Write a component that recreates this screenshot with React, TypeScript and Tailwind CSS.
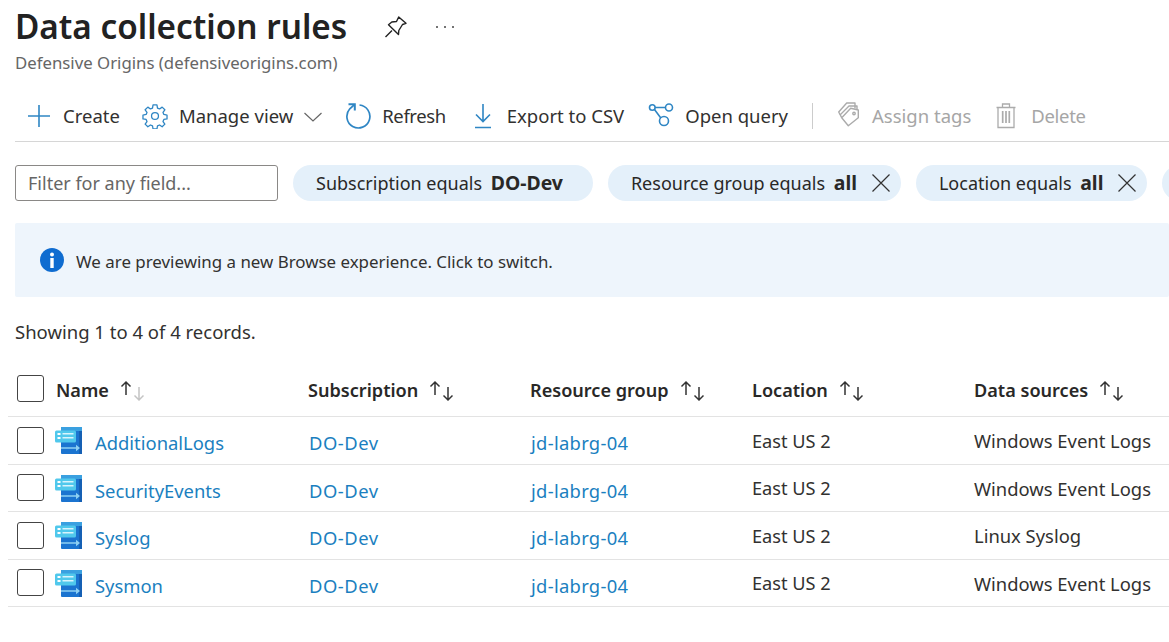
import type { ReactNode } from "react";

const font = "font-['Noto_Sans','Open_Sans',sans-serif]";

const rows = [
  { name: "AdditionalLogs", source: "Windows Event Logs" },
  { name: "SecurityEvents", source: "Windows Event Logs" },
  { name: "Syslog", source: "Linux Syslog" },
  { name: "Sysmon", source: "Windows Event Logs" },
];

const PlusIcon = () => (
  <svg width="24" height="24" viewBox="0 0 24 24" fill="none" stroke="#2f86c4" strokeWidth="1.6">
    <path d="M12 1v22M1 12h22" />
  </svg>
);

const GearIcon = () => (
  <svg width="26" height="26" viewBox="0 0 24 24" fill="none" stroke="#2f86c4" strokeWidth="1.2" strokeLinejoin="round">
    <circle cx="12" cy="12" r="3.2" />
    <path d="M10.2 1.8h3.6l.5 2.9 1.9.8 2.4-1.7 2.5 2.5-1.7 2.4.8 1.9 2.9.5v3.6l-2.9.5-.8 1.9 1.7 2.4-2.5 2.5-2.4-1.7-1.9.8-.5 2.9h-3.6l-.5-2.9-1.9-.8-2.4 1.7-2.5-2.5 1.7-2.4-.8-1.9-2.9-.5v-3.6l2.9-.5.8-1.9-1.7-2.4 2.5-2.5 2.4 1.7 1.9-.8z" />
  </svg>
);

const RefreshIcon = () => (
  <svg width="26" height="26" viewBox="0 0 26 26" fill="none" stroke="#2f86c4" strokeWidth="1.7">
    <path d="M14.5 2A11.5 11.5 0 1 1 4.8 5.8L9.5 1.5" />
    <path d="M3.5 1.2h6.3v6.3" strokeWidth="2" />
  </svg>
);

const DownloadIcon = () => (
  <svg width="18" height="26" viewBox="0 0 18 26" fill="none" stroke="#2f86c4" strokeWidth="1.6">
    <path d="M9 1v17M2 11.5 9 18.5l7-7M1 24.5h16" />
  </svg>
);

const QueryIcon = () => (
  <svg width="26" height="26" viewBox="0 0 26 26" fill="none" stroke="#2f86c4" strokeWidth="1.6">
    <circle cx="4.3" cy="4.5" r="2.8" />
    <circle cx="21" cy="4.5" r="3.5" />
    <circle cx="16" cy="18" r="4.5" />
    <path d="M7.1 4.5h10.4M6.5 6.5l6.3 8.5" />
  </svg>
);

const TagsIcon = () => (
  <svg width="24" height="28" viewBox="0 0 24 28" fill="none" stroke="#ababab" strokeWidth="1.4" strokeLinejoin="round">
    <path d="M3.7 15.7 12.7 6.3 20.3 8V15.7L10.3 23.7z" />
    <path d="M3.7 15.7 0.7 10 8.7 1H17V6.5" />
    <path d="M2 13 11 4H19V7.5" />
    <circle cx="16" cy="11.5" r="1.2" />
  </svg>
);

const TrashIcon = () => (
  <svg width="20" height="26" viewBox="0 0 20 26" fill="none" stroke="#ababab" strokeWidth="1.3">
    <path d="M0.5 4.5h19M6.5 4.5V1h7v3.5M2 4.5v20h16v-20" />
    <path d="M6.7 8v12M10 8v12M13.3 8v12" strokeWidth="1.7" />
  </svg>
);

const PinIcon = () => (
  <svg width="22" height="22" viewBox="0 0 22 22" fill="none" stroke="#222" strokeWidth="1.4" strokeLinejoin="round">
    <path d="M0.5 21 7 14.5M13.7 1 21 7.3 17.5 8.5 13.8 14.5 13.5 18.5 3.5 8.8 6.8 6 11.5 5.5z" />
  </svg>
);

const CloseIcon = () => (
  <svg width="20" height="20" viewBox="0 0 20 20" fill="none" stroke="#333" strokeWidth="1.2">
    <path d="M1.5 1.5l17 17M18.5 1.5l-17 17" />
  </svg>
);

const InfoIcon = () => (
  <svg width="24" height="24" viewBox="0 0 24 24">
    <circle cx="12" cy="12" r="12" fill="#0f6cd0" />
    <circle cx="12" cy="6.5" r="2" fill="#fff" />
    <rect x="10.3" y="10" width="3.4" height="10" fill="#fff" />
  </svg>
);

const SortIcon = ({ dim }: { dim?: boolean }) => (
  <svg width="26" height="22" viewBox="0 0 26 22" fill="none" strokeWidth="1.5">
    <path d="M8 15V2M3.5 6.5 8 2l4.5 4.5" stroke="#333" />
    <path d="M21 7v13M16.5 15.5 21 20l4.5-4.5" stroke={dim ? "#c4c4c4" : "#333"} />
  </svg>
);

const RuleIcon = () => (
  <svg width="28" height="28" viewBox="0 0 28 28">
    <rect x="6" y="1" width="21" height="27" rx="1" fill="#1b74d0" />
    <rect x="6" y="1" width="21" height="4" fill="#3aa0e0" />
    <rect x="24" y="5" width="3" height="23" fill="#1560b4" />
    <path d="M6 21.2h15v-2.5l4 3.3-4 3.3v-2.5H6z" fill="#8ed0f2" />
    <rect x="0" y="4.5" width="21" height="12" rx="1.5" fill="#50c8ec" />
    <rect x="2.5" y="7" width="3" height="2" fill="#fff" />
    <rect x="2.5" y="11" width="3" height="2" fill="#fff" />
    <rect x="7.5" y="7" width="11" height="1.5" fill="#d8f4fc" />
    <rect x="7.5" y="11" width="11" height="1.5" fill="#d8f4fc" />
  </svg>
);

function ToolButton({ icon, label, disabled, className }: { icon: ReactNode; label: string; disabled?: boolean; className: string }) {
  return (
    <div className={`flex items-center text-[18.5px] ${disabled ? "text-[#a6a6a6]" : "text-[#323130]"} ${className}`}>
      {icon}
      <span>{label}</span>
    </div>
  );
}

function Pill({ label, value, close }: { label: string; value: string; close?: boolean }) {
  return (
    <div className="flex h-9 shrink-0 items-center gap-[14px] whitespace-nowrap rounded-full bg-[#e4f0fa] pl-[23px] pr-[10px] text-[18px] text-[#292827]">
      <span className={close ? "" : "pr-[20px]"}>
        {label} <b className="ml-[4px] text-[19.4px] font-bold leading-none">{value}</b>
      </span>
      {close && <CloseIcon />}
    </div>
  );
}

function Check({ className }: { className?: string }) {
  return <div className={`h-[27px] w-[27px] rounded-[3px] border border-[#444] bg-white ${className ?? ""}`} />;
}

function HeaderCell({ label, dim }: { label: string; dim?: boolean }) {
  return (
    <div className="flex items-center gap-[9px] pt-[6px] text-[18.1px] font-semibold text-[#292827]">
      <span>{label}</span>
      <SortIcon dim={dim} />
    </div>
  );
}

export default function App() {
  return (
    <div className={`${font} h-[642px] w-[1169px] overflow-hidden bg-white`}>
      <div className="pl-[15px]">
        <div className="flex h-[54px] items-center">
          <h1 className="text-[33.3px] font-semibold leading-none text-[#222]">Data collection rules</h1>
          <div className="ml-[38px]">
            <PinIcon />
          </div>
          <div className="ml-[29px] flex gap-[6px]">
            <div className="h-[2px] w-[2px] rounded-full bg-[#444]" />
            <div className="h-[2px] w-[2px] rounded-full bg-[#444]" />
            <div className="h-[2px] w-[2px] rounded-full bg-[#444]" />
          </div>
        </div>
        <div className="h-[25px] text-[16.8px] leading-[18px] text-[#666]">Defensive Origins (defensiveorigins.com)</div>
      </div>

      <div className="ml-[15px] flex h-[63px] items-center border-b border-[#d6d6d6] pl-[12px] pt-[12px]">
        <ToolButton className="gap-[12px]" icon={<PlusIcon />} label="Create" />
        <ToolButton className="ml-[22px] gap-[11px]" icon={<GearIcon />} label="Manage view" />
        <svg className="ml-[10px] mt-[2px]" width="20" height="12" viewBox="0 0 20 12" fill="none" stroke="#666" strokeWidth="1.2">
          <path d="M1.5 2 10 10l8.5-8" />
        </svg>
        <ToolButton className="ml-[22px] gap-[11px] tracking-[-0.4px]" icon={<RefreshIcon />} label="Refresh" />
        <ToolButton className="ml-[28px] gap-[15px]" icon={<DownloadIcon />} label="Export to CSV" />
        <ToolButton className="ml-[24px] gap-[11px]" icon={<QueryIcon />} label="Open query" />
        <div className="ml-[24px] h-[26px] w-px bg-[#ccc]" />
        <ToolButton className="ml-[25px] gap-[10px]" icon={<TagsIcon />} label="Assign tags" disabled />
        <ToolButton className="ml-[25px] gap-[15px] tracking-[-0.3px]" icon={<TrashIcon />} label="Delete" disabled />
      </div>

      <div className="flex items-center gap-[15px] overflow-hidden pl-[15px] pt-[23px]">
        <div className="flex h-9 w-[263px] shrink-0 items-center rounded-[3px] border border-[#8a8886] pl-[12px] text-[18px] text-[#666]">
          Filter for any field...
        </div>
        <Pill label="Subscription equals" value="DO-Dev" />
        <Pill label="Resource group equals" value="all" close />
        <Pill label="Location equals" value="all" close />
        <div className="h-9 w-[40px] shrink-0 rounded-l-full bg-[#e4f0fa]" />
      </div>

      <div className="ml-[15px] mt-[22px] flex h-[74px] items-center gap-[12px] rounded-[2px] bg-[#eef5fc] pl-[25px] text-[16.9px] text-[#323130]">
        <InfoIcon />
        <span className="pt-[3px]">We are previewing a new Browse experience. Click to switch.</span>
      </div>

      <div className="pl-[15px] pt-[23px] text-[18.5px] leading-[24px] text-[#323130]">Showing 1 to 4 of 4 records.</div>

      <div className="ml-[8px] mt-[16px]">
        <div className="grid h-[57px] grid-cols-[300px_222px_222px_222px_1fr] items-center border-b border-[#e3e3e3]">
          <div className="flex items-center gap-[12px] pl-[9px]">
            <Check className="mt-[2px]" />
            <HeaderCell label="Name" dim />
          </div>
          <HeaderCell label="Subscription" />
          <HeaderCell label="Resource group" />
          <HeaderCell label="Location" />
          <HeaderCell label="Data sources" />
        </div>
        {rows.map((row) => (
          <div
            key={row.name}
            className="grid h-[47.5px] grid-cols-[300px_222px_222px_222px_1fr] items-center border-b border-[#e3e3e3] text-[18.4px]"
          >
            <div className="flex items-center gap-[11px] pl-[9px]">
              <Check />
              <RuleIcon />
              <span className="pl-px pt-[6px] text-[#1b7fc0]">{row.name}</span>
            </div>
            <span className="pl-px pt-[6px] tracking-[0.5px] text-[#1b7fc0]">DO-Dev</span>
            <span className="pl-px pt-[6px] tracking-[0.3px] text-[#1b7fc0]">jd-labrg-04</span>
            <span className="pt-[2px] text-[18.2px] text-[#323130]">East US 2</span>
            <span className="pt-[2px] text-[#323130]">{row.source}</span>
          </div>
        ))}
      </div>
    </div>
  );
}
